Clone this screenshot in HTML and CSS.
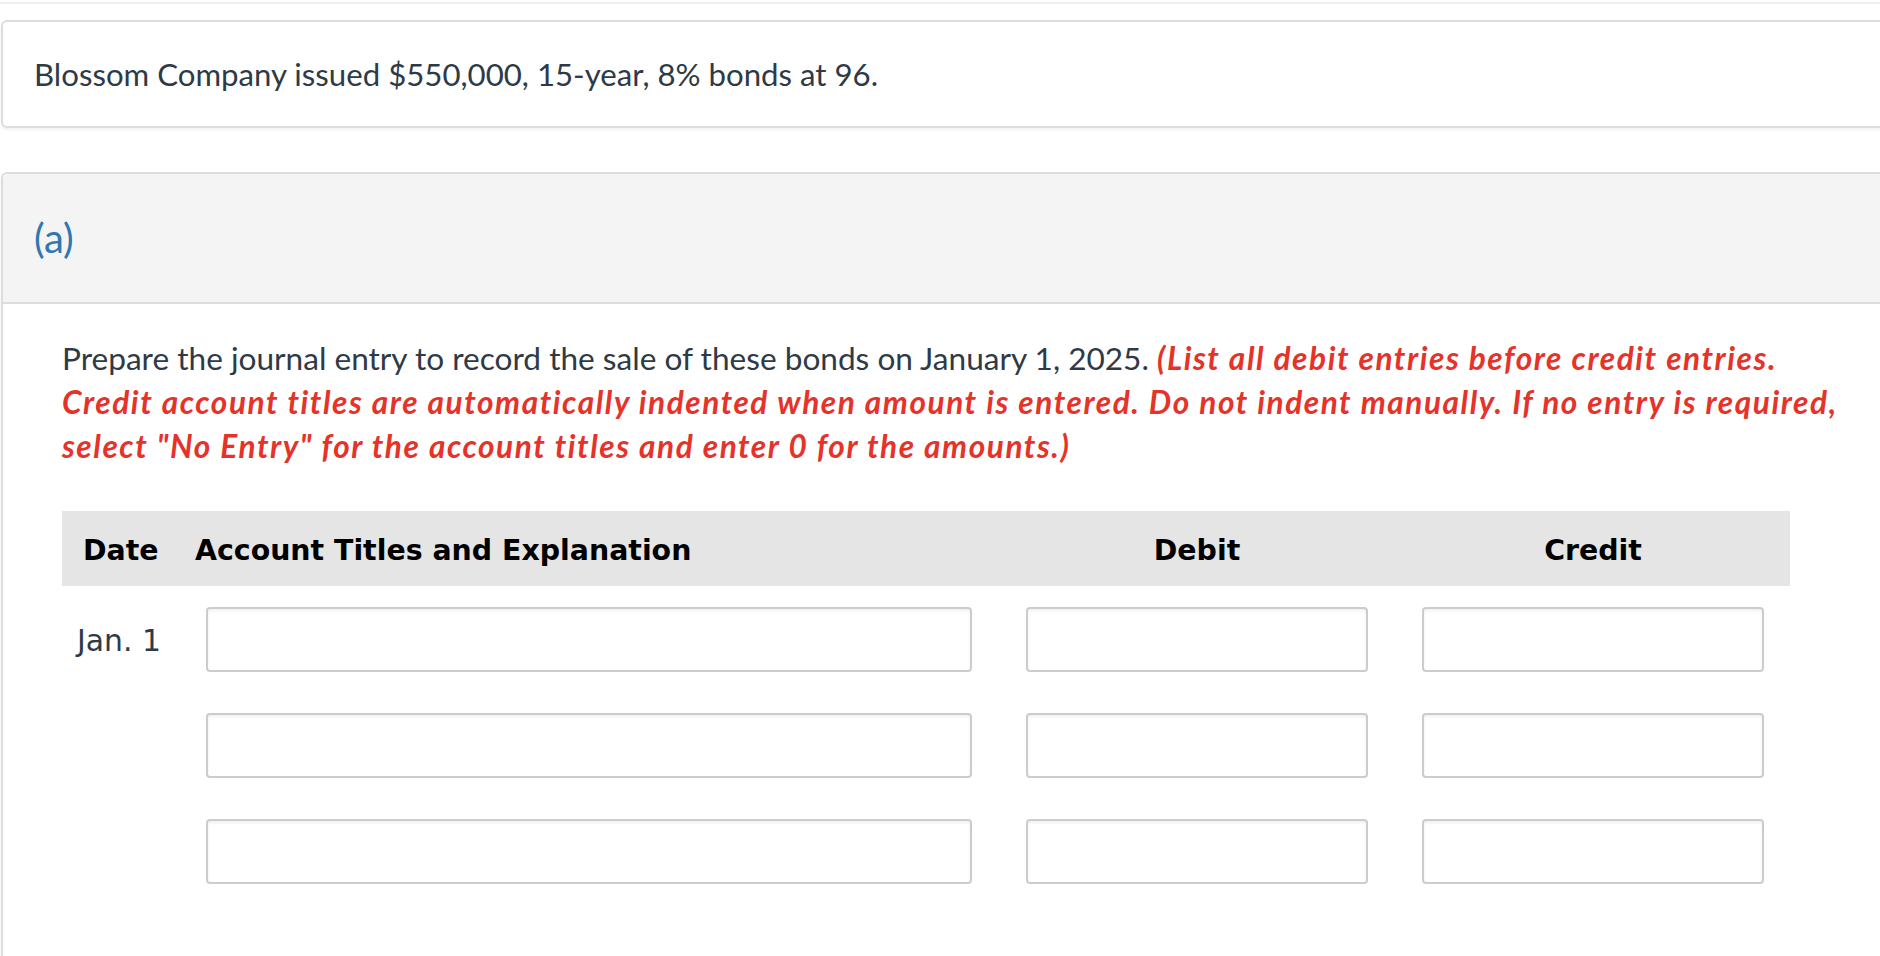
FILE: index.html
```html
<!DOCTYPE html>
<html lang="en">
<head>
<meta charset="utf-8">
<title>Bonds journal entry</title>
<link rel="stylesheet" href="styles.css">
</head>
<body>
<div class="topline"></div>
<div class="card intro">
  <p class="intro-text">Blossom Company issued $550,000, 15-year, 8% bonds at 96.</p>
</div>
<div class="card part">
  <div class="part-head"><span class="part-label">(a)</span></div>
  <div class="part-body">
    <p class="prompt">Prepare the journal entry to record the sale of these bonds on January 1, 2025. <em class="note">(List all debit entries before credit entries. Credit account titles are automatically indented when amount is entered. Do not indent manually. If no entry is required, select "No Entry" for the account titles and enter 0 for the amounts.)</em></p>
    <div class="journal">
      <div class="j-head">
        <div class="h-date">Date</div>
        <div class="h-acct">Account Titles and Explanation</div>
        <div class="h-amt">Debit</div>
        <div class="h-amt h-credit">Credit</div>
      </div>
      <div class="j-row">
        <div class="c-date">Jan. 1</div>
        <input class="in in-acct" type="text">
        <input class="in in-amt" type="text">
        <input class="in in-amt" type="text">
      </div>
      <div class="j-row">
        <div class="c-date"></div>
        <input class="in in-acct" type="text">
        <input class="in in-amt" type="text">
        <input class="in in-amt" type="text">
      </div>
      <div class="j-row">
        <div class="c-date"></div>
        <input class="in in-acct" type="text">
        <input class="in in-amt" type="text">
        <input class="in in-amt" type="text">
      </div>
    </div>
  </div>
</div>
</body>
</html>
```

FILE: styles.css
```css
html, body {
  margin: 0;
  padding: 0;
  background: #ffffff;
  overflow: hidden;
}

body {
  font-family: Lato, "Liberation Sans", sans-serif;
  color: #2e3a46;
  width: 1880px;
  height: 956px;
}

.topline {
  height: 2px;
  margin-top: 2px;
  background: #efefef;
}

.card {
  margin-left: 1px;
  width: 1960px;
  border: 2px solid #dddddd;
  border-radius: 6px;
  box-shadow: 0 2px 3px rgba(0, 0, 0, 0.06);
  background: #ffffff;
}

.intro {
  margin-top: 16px;
  padding: 30px 31px;
}

.intro-text {
  margin: 0;
  font-size: 31.2px;
  line-height: 44px;
}

.part {
  margin-top: 44px;
  height: 900px;
}

.part-head {
  height: 128px;
  background: #f4f4f4;
  border-bottom: 2px solid #dddddd;
  border-radius: 5px 5px 0 0;
  display: flex;
  align-items: center;
  padding-left: 31px;
}

.part-label {
  font-size: 40px;
  color: #2f77b1;
}

.part-body {
  padding: 32px 0 0 59px;
}

.prompt {
  margin: 0;
  width: 1800px;
  font-size: 31.6px;
  line-height: 44px;
}

.note {
  color: #e5332a;
  font-style: italic;
  font-weight: 700;
  letter-spacing: 1.55px;
}

.journal {
  margin-top: 43px;
  width: 1728px;
}

.j-head {
  display: flex;
  align-items: center;
  height: 75px;
  padding-top: 4px;
  box-sizing: border-box;
  background: #e5e5e5;
  font-family: "DejaVu Sans", Verdana, sans-serif;
  font-weight: 700;
  font-size: 28.4px;
  color: #000000;
}

.h-date {
  width: 133px;
  padding-left: 21px;
  box-sizing: border-box;
}

.h-acct {
  width: 831px;
}

.h-amt {
  width: 342px;
  text-align: center;
}

.h-credit {
  margin-left: 54px;
}

.j-row {
  display: flex;
  align-items: center;
  margin-top: 41px;
}

.j-head + .j-row {
  margin-top: 21px;
}

.c-date {
  width: 144px;
  padding-left: 15px;
  padding-top: 2px;
  box-sizing: border-box;
  font-family: "DejaVu Sans", Verdana, sans-serif;
  font-size: 29.8px;
  color: #2e3a46;
}

.in {
  display: block;
  height: 65px;
  margin: 0;
  padding: 0 12px;
  box-sizing: border-box;
  border: 2px solid #cccccc;
  border-radius: 4px;
  background: #ffffff;
  box-shadow: inset 0 2px 3px rgba(0, 0, 0, 0.06);
  font-size: 24px;
  outline: none;
}

.in-acct {
  width: 766px;
}

.in-amt {
  width: 342px;
  margin-left: 54px;
}
```
